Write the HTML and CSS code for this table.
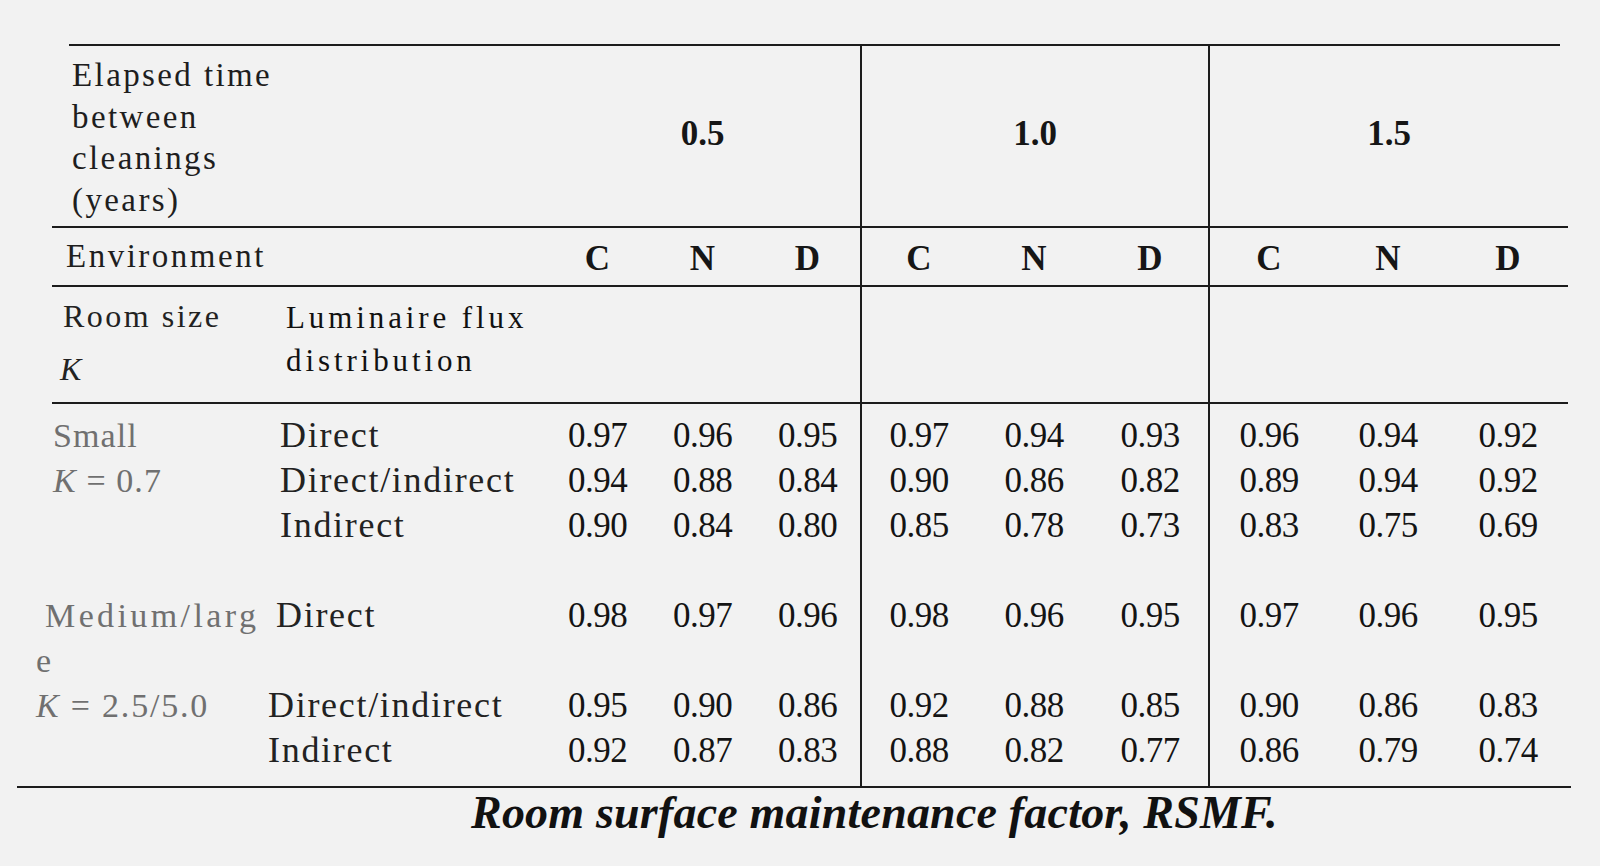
FILE: index.html
```html
<!DOCTYPE html>
<html>
<head>
<meta charset="utf-8">
<link rel="stylesheet" href="styles.css">
</head>
<body>
<div class="page">
  <div class="rule rule-top"></div>

  <div class="row head ruled">
    <div class="elapsed">Elapsed time<br>between<br>cleanings<br>(years)</div>
    <div class="grp">0.5</div>
    <div class="grp sep">1.0</div>
    <div class="grp sep">1.5</div>
  </div>

  <div class="row env ruled">
    <div class="env-label">Environment</div>
    <div class="hd">C</div><div class="hd">N</div><div class="hd">D</div>
    <div class="hd sep">C</div><div class="hd">N</div><div class="hd">D</div>
    <div class="hd sep">C</div><div class="hd">N</div><div class="hd">D</div>
  </div>

  <div class="row roomhdr ruled">
    <div class="room">Room size<div class="k">K</div></div>
    <div class="lum">Luminaire flux<br>distribution</div>
    <div class="blank3"></div>
    <div class="blank3 sep"></div>
    <div class="blank3 sep"></div>
  </div>

  <div class="row data first">
    <div class="lbl">Small</div><div class="dist">Direct</div>
    <div class="v">0.97</div><div class="v">0.96</div><div class="v">0.95</div>
    <div class="v sep">0.97</div><div class="v">0.94</div><div class="v">0.93</div>
    <div class="v sep">0.96</div><div class="v">0.94</div><div class="v">0.92</div>
  </div>
  <div class="row data">
    <div class="lbl"><i>K</i> = 0.7</div><div class="dist">Direct/indirect</div>
    <div class="v">0.94</div><div class="v">0.88</div><div class="v">0.84</div>
    <div class="v sep">0.90</div><div class="v">0.86</div><div class="v">0.82</div>
    <div class="v sep">0.89</div><div class="v">0.94</div><div class="v">0.92</div>
  </div>
  <div class="row data">
    <div class="lbl"></div><div class="dist">Indirect</div>
    <div class="v">0.90</div><div class="v">0.84</div><div class="v">0.80</div>
    <div class="v sep">0.85</div><div class="v">0.78</div><div class="v">0.73</div>
    <div class="v sep">0.83</div><div class="v">0.75</div><div class="v">0.69</div>
  </div>
  <div class="row data">
    <div></div><div></div>
    <div></div><div></div><div></div>
    <div class="sep"></div><div></div><div></div>
    <div class="sep"></div><div></div><div></div>
  </div>
  <div class="row data">
    <div class="lbl lo wide">Medium/larg</div><div class="dist lo">Direct</div>
    <div class="v">0.98</div><div class="v">0.97</div><div class="v">0.96</div>
    <div class="v sep">0.98</div><div class="v">0.96</div><div class="v">0.95</div>
    <div class="v sep">0.97</div><div class="v">0.96</div><div class="v">0.95</div>
  </div>
  <div class="row data">
    <div class="lbl lo2">e</div><div></div>
    <div></div><div></div><div></div>
    <div class="sep"></div><div></div><div></div>
    <div class="sep"></div><div></div><div></div>
  </div>
  <div class="row data">
    <div class="lbl lo2"><i>K</i> = 2.5/5.0</div><div class="dist lo3">Direct/indirect</div>
    <div class="v">0.95</div><div class="v">0.90</div><div class="v">0.86</div>
    <div class="v sep">0.92</div><div class="v">0.88</div><div class="v">0.85</div>
    <div class="v sep">0.90</div><div class="v">0.86</div><div class="v">0.83</div>
  </div>
  <div class="row data last">
    <div class="lbl"></div><div class="dist lo3">Indirect</div>
    <div class="v">0.92</div><div class="v">0.87</div><div class="v">0.83</div>
    <div class="v sep">0.88</div><div class="v">0.82</div><div class="v">0.77</div>
    <div class="v sep">0.86</div><div class="v">0.79</div><div class="v">0.74</div>
  </div>

  <div class="rule rule-bottom"></div>
  <div class="caption">Room surface maintenance factor, RSMF.</div>
</div>
</body>
</html>
```

FILE: styles.css
```css
html, body {
  margin: 0;
  padding: 0;
}
body {
  background: #f2f2f2;
  font-family: "Liberation Serif", "Times New Roman", serif;
  color: #161616;
}
.page {
  width: 1600px;
  height: 866px;
  box-sizing: border-box;
  padding-top: 44px;
  overflow: hidden;
}
.rule {
  height: 2px;
  background: #1c1c1c;
}
.rule-top {
  margin-left: 69px;
  width: 1491px;
}
.rule-bottom {
  margin-left: 17px;
  width: 1554px;
}
.row {
  display: grid;
  grid-template-columns: 228px 265px repeat(3, 105px) repeat(3, 116px) repeat(3, 120px);
  margin-left: 52px;
  width: 1516px;
}
.row.ruled {
  border-bottom: 2px solid #1c1c1c;
}
.sep {
  border-left: 2px solid #1c1c1c;
}

/* header row */
.head {
  height: 180px;
}
.elapsed {
  grid-column: span 2;
  padding: 9px 0 0 20px;
  font-size: 33px;
  line-height: 41.5px;
  letter-spacing: 2.4px;
  color: #1e1e1e;
}
.grp {
  grid-column: span 3;
  display: flex;
  align-items: center;
  justify-content: center;
  font-weight: bold;
  font-size: 35px;
  padding-bottom: 4px;
}

/* environment row */
.env {
  height: 57px;
}
.env > div {
  display: flex;
  align-items: center;
  padding-top: 4px;
}
.env-label {
  grid-column: span 2;
  padding-left: 14px;
  font-size: 33px;
  letter-spacing: 2.5px;
  color: #1e1e1e;
}
.env > .env-label {
  padding-top: 0;
}
.hd {
  justify-content: center;
  font-weight: bold;
  font-size: 35px;
}

/* room size header row */
.room {
  padding: 8px 0 0 11px;
  font-size: 32px;
  line-height: 43px;
  letter-spacing: 2.5px;
  color: #222;
}
.k {
  font-style: italic;
  letter-spacing: 0;
  margin-top: 10px;
  margin-left: -3px;
}
.roomhdr {
  height: 115px;
}
.lum {
  padding: 9px 0 0 6px;
  font-size: 31px;
  line-height: 43px;
  letter-spacing: 3.9px;
  color: #111;
}
.blank3 {
  grid-column: span 3;
}

/* data rows */
.data > div {
  height: 45px;
  line-height: 45px;
  white-space: nowrap;
}
.data.first > div {
  padding-top: 9px;
}
.data.last > div {
  padding-bottom: 13px;
}
.v {
  text-align: center;
  font-size: 35px;
  letter-spacing: -0.5px;
  color: #141414;
}
.lbl {
  font-size: 34px;
  letter-spacing: 1.1px;
  color: #707070;
  padding-left: 1px;
}
.lbl.wide {
  letter-spacing: 3.4px;
}
.lbl.lo {
  margin-left: -8px;
}
.lbl.lo2 {
  margin-left: -17px;
  letter-spacing: 1.8px;
}
.dist {
  font-size: 36px;
  letter-spacing: 1.7px;
  color: #222;
}
.dist.lo {
  margin-left: -4px;
}
.dist.lo3 {
  margin-left: -12px;
}

/* caption */
.caption {
  padding-left: 471px;
  font-size: 46px;
  line-height: 50px;
  font-weight: bold;
  font-style: italic;
  letter-spacing: 0.2px;
  color: #111;
  white-space: nowrap;
}
```
